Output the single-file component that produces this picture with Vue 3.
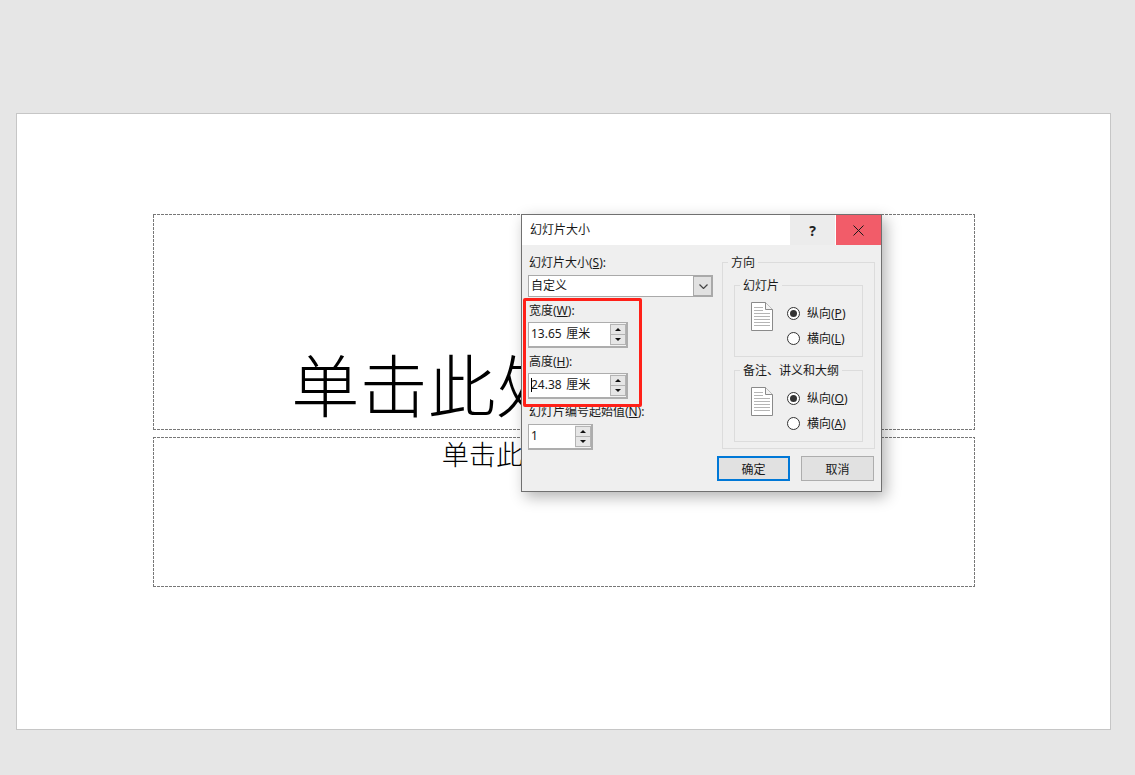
<script setup>
const groups = [
  { title: '幻灯片', options: [['纵向', 'P', true], ['横向', 'L', false]] },
  { title: '备注、讲义和大纲', options: [['纵向', 'O', true], ['横向', 'A', false]] },
]
const docLines = [11, 14, 17, 20, 23]
</script>

<template>
  <div class="stage">
    <main class="slide">
      <div class="ph ph-title"><span>单击此处添加标题</span></div>
      <div class="ph ph-sub"><span>单击此处添加副标题</span></div>
    </main>

    <section class="dialog">
      <header class="titlebar">
        <span class="dlg-title">幻灯片大小</span>
        <button class="tb-btn help">?</button>
        <button class="tb-btn close">
          <svg width="11" height="11" viewBox="0 0 11 11"><path d="M.5.5l10 10M10.5.5l-10 10" stroke="#1a1a1a" stroke-width="1" fill="none"/></svg>
        </button>
      </header>

      <div class="body">
        <div class="left">
          <label class="lbl l-first">幻灯片大小(<u>S</u>):</label>
          <div class="select">
            <span class="select-val">自定义</span>
            <span class="select-btn">
              <svg width="9" height="5" viewBox="0 0 9 5"><path d="M.5.5l4 4 4-4" stroke="#444" stroke-width="1.2" fill="none"/></svg>
            </span>
          </div>

          <label class="lbl l-w">宽度(<u>W</u>):</label>
          <div class="spin wide">
            <span class="spin-val">13.65 厘米</span>
            <span class="spin-btns">
              <i class="up"></i><i class="down"></i>
            </span>
          </div>

          <label class="lbl l-h">高度(<u>H</u>):</label>
          <div class="spin wide">
            <span class="spin-val"><b class="caret"></b>24.38 厘米</span>
            <span class="spin-btns">
              <i class="up"></i><i class="down"></i>
            </span>
          </div>

          <label class="lbl l-n">幻灯片编号起始值(<u>N</u>):</label>
          <div class="spin narrow">
            <span class="spin-val">1</span>
            <span class="spin-btns">
              <i class="up"></i><i class="down"></i>
            </span>
          </div>
        </div>

        <div class="right">
          <div class="group outer">
            <span class="legend">方向</span>
            <div v-for="g in groups" :key="g.title" class="group inner">
              <span class="legend">{{ g.title }}</span>
              <svg class="doc" width="22" height="29" viewBox="0 0 22 29">
                <path d="M.5.5h14l7 7v21H.5z" fill="#fff" stroke="#8a8a8a"/>
                <path d="M14.5.5v7h7" fill="#f2f2f2" stroke="#8a8a8a"/>
                <path v-for="y in docLines" :key="y" :d="`M3 ${y}.5h16`" stroke="#b5b5b5"/>
                <path d="M3 8.5h9M3 5.5h9" stroke="#b5b5b5"/>
              </svg>
              <div class="radios">
                <div v-for="o in g.options" :key="o[1]" class="radio-row">
                  <span class="radio" :class="{ on: o[2] }"></span>
                  <span class="radio-txt">{{ o[0] }}(<u>{{ o[1] }}</u>)</span>
                </div>
              </div>
            </div>
          </div>
          <div class="actions">
            <button class="btn primary">确定</button>
            <button class="btn">取消</button>
          </div>
        </div>
      </div>

      <div class="highlight"></div>
    </section>
  </div>
</template>

<style>
html, body { margin: 0; background: #e6e6e6; }
</style>

<style scoped>
.stage {
  position: relative;
  width: 1135px;
  height: 775px;
  padding: 113px 24px 0 16px;
  box-sizing: border-box;
  background: #e6e6e6;
  overflow: hidden;
  font-family: "Noto Sans CJK SC", sans-serif;
}
.slide {
  width: 1095px;
  height: 617px;
  box-sizing: border-box;
  border: 1px solid #c6c6c6;
  background: #fff;
  padding: 100px 135px 0 136px;
  color: #000;
}
.ph {
  box-sizing: border-box;
  text-align: center;
  white-space: nowrap;
  overflow: hidden;
  background:
    repeating-linear-gradient(90deg, #777 0 3px, transparent 3px 4px) top / 100% 1px no-repeat,
    repeating-linear-gradient(90deg, #777 0 3px, transparent 3px 4px) bottom / 100% 1px no-repeat,
    repeating-linear-gradient(0deg, #777 0 3px, transparent 3px 4px) left / 1px 100% no-repeat,
    repeating-linear-gradient(0deg, #777 0 3px, transparent 3px 4px) right / 1px 100% no-repeat;
}
.ph-title {
  height: 216px;
  display: flex;
  align-items: flex-end;
  justify-content: center;
  font-size: 68.2px;
  line-height: 88px;
  font-weight: 300;
  padding-bottom: 3px;
}
.ph-sub {
  height: 150px;
  margin-top: 7px;
  font-size: 27.2px;
  line-height: 32px;
  font-weight: 300;
}
.dialog {
  position: absolute;
  left: 521px;
  top: 214px;
  width: 361px;
  height: 278px;
  box-sizing: border-box;
  border: 1px solid #707070;
  background: #efefef;
  box-shadow: 4px 5px 14px rgba(0, 0, 0, .3);
  font-family: "Noto Sans", "Noto Sans CJK SC", sans-serif;
  font-size: 12px;
  color: #1a1a1a;
}
.titlebar {
  height: 30px;
  background: #fff;
  display: flex;
  align-items: stretch;
}
.dlg-title {
  flex: 1;
  padding-left: 8px;
  line-height: 29px;
}
.tb-btn {
  border: 0;
  padding: 0;
  width: 45px;
  display: flex;
  align-items: center;
  justify-content: center;
  font: inherit;
}
.help {
  background: #ececec;
  font-weight: 700;
  font-size: 14px;
  color: #222;
  margin-right: 1px;
}
.close { background: #f25c69; }
.body {
  display: flex;
  padding-left: 6px;
}
.left {
  width: 194px;
  flex: none;
}
.lbl {
  display: block;
  height: 16px;
  line-height: 18px;
  padding-left: 1px;
  white-space: nowrap;
}
.l-first { margin-top: 9px; margin-bottom: 5px; }
.l-w { margin-top: 5px; margin-bottom: 4px; }
.l-h { margin-top: 5px; margin-bottom: 4px; }
.l-n { margin-top: 4px; margin-bottom: 5px; }
.select {
  width: 185px;
  height: 22px;
  box-sizing: border-box;
  border: 1px solid #a9a9a9;
  background: #fff;
  display: flex;
}
.select-val {
  flex: 1;
  padding-left: 2px;
  line-height: 19px;
}
.select-btn {
  width: 18px;
  border-left: 1px solid #a9a9a9;
  background: #e1e1e1;
  box-shadow: inset -1px -1px 0 #a9a9a9, inset 0 1px 0 #a9a9a9;
  display: flex;
  align-items: center;
  justify-content: center;
}
.spin {
  height: 26px;
  box-sizing: border-box;
  border: 1px solid #adadad;
  box-shadow: inset -1px -1px 0 #adadad;
  background: #fff;
  display: flex;
}
.wide { width: 100px; }
.narrow { width: 65px; }
.spin-val {
  flex: 1;
  padding-left: 2px;
  line-height: 22px;
  position: relative;
  color: #1a1a1a;
  word-spacing: 1.5px;
}
.caret {
  position: absolute;
  left: 2px;
  top: 4px;
  width: 1px;
  height: 14px;
  background: #000;
}
.spin-btns {
  width: 16px;
  background: #f2f2f2;
  display: flex;
  flex-direction: column;
  padding: 1px 0;
  margin: 0 1px 1px 0;
  box-sizing: border-box;
}
.spin-btns i {
  flex: 1;
  position: relative;
  border: 1px solid #b4b4b4;
  background: #e6e6e6;
}
.spin-btns i + i { margin-top: -1px; }
.spin-btns i::after {
  content: "";
  position: absolute;
  left: 50%;
  top: 50%;
  margin: -2px 0 0 -3.5px;
  border-left: 3.5px solid transparent;
  border-right: 3.5px solid transparent;
}
.up::after { border-bottom: 3.5px solid #111; }
.down::after { border-top: 3.5px solid #111; }
.right {
  width: 153px;
  flex: none;
}
.group {
  position: relative;
  box-sizing: border-box;
  border: 1px solid #dcdcdc;
}
.outer {
  width: 153px;
  height: 187px;
  margin-top: 17px;
  padding: 22px 11px 0;
}
.inner {
  height: 72px;
  margin-bottom: 13px;
  display: flex;
  padding: 16px 0 0 16px;
  gap: 14px;
}
.legend {
  position: absolute;
  left: 5px;
  top: -8px;
  padding: 0 3px;
  height: 16px;
  line-height: 16px;
  background: #efefef;
  white-space: nowrap;
}
.doc { flex: none; }
.radios {
  display: flex;
  flex-direction: column;
  gap: 9px;
  margin-top: 3px;
}
.radio-row {
  display: flex;
  align-items: center;
  height: 16px;
  gap: 7px;
}
.radio {
  width: 13px;
  height: 13px;
  box-sizing: border-box;
  border: 1px solid #333;
  border-radius: 50%;
  background: #fff;
  position: relative;
}
.radio.on::after {
  content: "";
  position: absolute;
  inset: 2px;
  border-radius: 50%;
  background: #333;
}
.radio-txt { white-space: nowrap; }
.actions {
  display: flex;
  gap: 11px;
  margin: 7px 0 0 -5px;
}
.btn {
  width: 73px;
  height: 25px;
  box-sizing: border-box;
  border: 1px solid #adadad;
  background: #e1e1e1;
  padding: 0;
  font: inherit;
  color: #1a1a1a;
}
.primary { border: 2px solid #0078d7; }
.highlight {
  position: absolute;
  left: 1px;
  top: 83px;
  width: 119px;
  height: 109px;
  box-sizing: border-box;
  border: 3px solid #ff2018;
  border-radius: 2px;
  pointer-events: none;
}
</style>
